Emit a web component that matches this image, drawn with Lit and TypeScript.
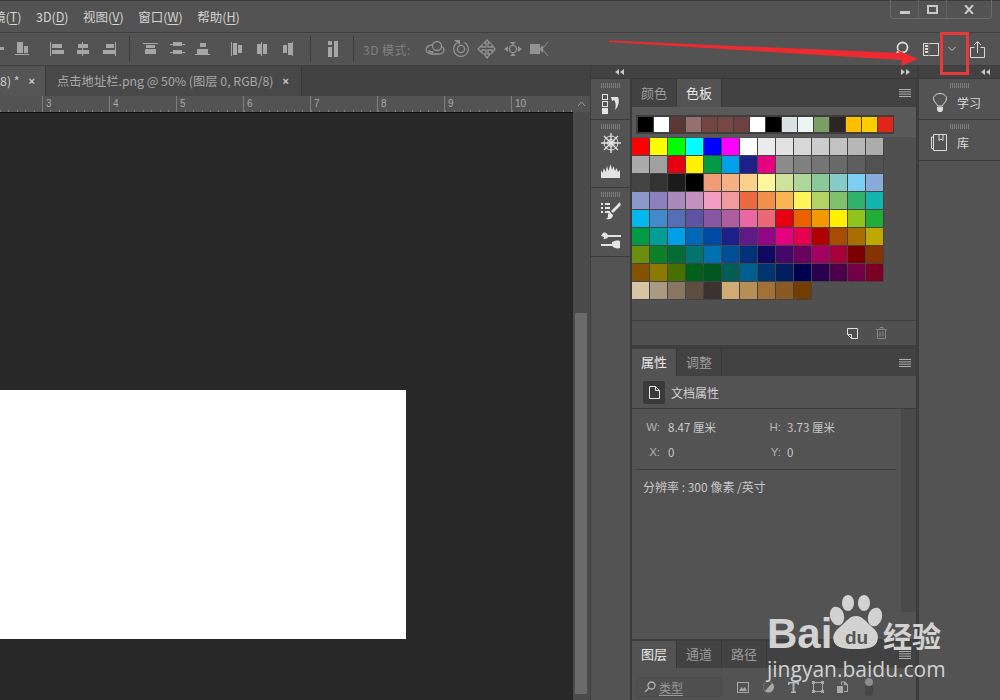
import { LitElement, html, css, svg } from "lit";
import { customElement } from "lit/decorators.js";

const RECENT = ["#000000","#ffffff","#5c3835","#976f6d","#744643","#754845","#6e4241","#ffffff","#000000","#d9e1e2","#ecf5f3","#7b9e64","#2c2523","#ffbf00","#ffcd00","#e1251b"];
const SWATCHES = [
"#ff0000 #ffff00 #00ff00 #00ffff #0000ff #ff00ff #ffffff #ebebeb #e1e1e1 #d7d7d7 #cccccc #c2c2c2 #b7b7b7 #acacac",
"#ababab #a0a0a0 #e60012 #fff200 #009944 #00a0e9 #1d2088 #e4007f #8c8c8c #808080 #757575 #6a6a6a #5e5e5e #525252",
"#444444 #333333 #1c1c1c #000000 #f19a76 #f5b183 #fad08a #fff69a #cee29b #afd69b #89c997 #84ccc9 #7ecef4 #88abda",
"#8c97cb #8c80bd #aa89bd #c490bf #f29ec2 #f29b9f #ec6941 #f19149 #f8b551 #fff45c #b3d465 #80c269 #31b16c #13b5b1",
"#00b7ee #448aca #556fb5 #5f52a0 #8957a1 #ae5da1 #ea68a2 #eb6877 #e60012 #eb6100 #f39800 #fff100 #8fc31f #22ac38",
"#009944 #009e96 #00a0e9 #0068b7 #0049a5 #1d2088 #601986 #920783 #e4007f #e5004f #b10000 #a84d00 #a86e00 #bfa900",
"#6b8e0c #0c7f29 #056c36 #007470 #0071b0 #004f94 #00317a #100964 #44076a #6a005f #a40061 #a5003a #7d0000 #833400",
"#855300 #8a7a00 #477000 #00621a #00561f #005e55 #005e91 #00356f #001f5e #00004e #2b004f #4d004a #730046 #7c0024",
"#d7c4a4 #aa9a84 #887563 #5e4e41 #3c3230 #d0ab73 #b58f55 #a07236 #885a21 #723e00",
].flatMap((r) => r.split(" "));

const ico = (body: unknown, w = 16, h = 16) =>
  html`<svg class="ic" width=${w} height=${h} viewBox="0 0 ${w} ${h}" fill="currentColor">${body}</svg>`;
const r = (x: number, y: number, w: number, h: number) => svg`<rect x=${x} y=${y} width=${w} height=${h}></rect>`;

const ALIGN = [
  [r(0,7,16,1),r(7,0,1,16),r(12,6,4,3)],
  [r(3,1,6,11),r(10,5,4,7),r(1,13,14,1)],
  [r(1,1,1,14),r(3,3,10,4),r(3,9,12,4)],
  [r(7,1,1,14),r(3,3,10,4),r(2,9,12,4)],
  [r(14,1,1,14),r(5,3,8,4),r(2,9,12,4)],
  [r(0,2,15,1),r(3,4,9,3),r(2,8,11,5)],
  [r(1,3,15,1),r(4,1,9,4),r(1,11,15,1),r(4,9,9,4)],
  [r(5,2,6,4),r(0,13,15,1),r(2,8,11,5)],
  [r(2,1,1,14),r(4,2,4,12),r(9,4,4,8)],
  [r(6,1,1,14),r(2,3,4,10),r(8,3,4,10)],
  [r(11,1,1,14),r(2,4,4,8),r(7,2,4,12)],
];

const W3D = [
  svg`<g fill="none" stroke="currentColor" stroke-width="1.3"><circle cx="12" cy="7" r="4.5"></circle><path d="M7 6c-3 0-6 2-6 5 0 2 3 4 6 4h7c3 0 5-2 5-4 0-2-1-3-3-4M4 12l2 3 2-2z"></path></g>`,
  svg`<g fill="none" stroke="currentColor" stroke-width="1.3"><circle cx="10" cy="10" r="7.4" stroke-dasharray="38 8" transform="rotate(-60 10 10)"></circle><circle cx="10" cy="10" r="3.6"></circle></g><path d="M3 1h6v5z"></path>`,
  svg`<g fill="none" stroke="currentColor" stroke-width="1.3"><path d="M10 1l3 3h-2v4h4V6l3 4-3 4v-3h-4v4h2l-3 4-3-4h2v-4H5v3l-4-4 4-4v2h4V4H7z"></path></g>`,
  svg`<circle cx="10" cy="10" r="3.6" fill="none" stroke="currentColor" stroke-width="1.4"></circle><path d="M7 3h6l-3 3zM7 17h6l-3-3zM1 10l4-3v6zM19 10l-4-3v6z"></path>`,
  svg`<path d="M1 5h10v10H1zM11 9l3-3v8l-3-3z"></path><path d="M19 3l-6 7 6 7" fill="none" stroke="currentColor" stroke-width="1"></path>`,
];

const chev = (left: boolean) => html`<svg class="chev" width="9" height="6" viewBox="0 0 9 6" fill="#c8c8c8">
  ${left ? svg`<path d="M4 0v6L0 3zM9 0v6L5 3z"></path>` : svg`<path d="M0 0v6l4-3zM5 0v6l4-3z"></path>`}</svg>`;

const menuIcon = html`<svg class="burger" width="12" height="8" viewBox="0 0 12 8" fill="#b0b0b0">${r(0,0,12,1)}${r(0,2.33,12,1)}${r(0,4.66,12,1)}${r(0,7,12,1)}</svg>`;

@customElement("app-root")
export class AppRoot extends LitElement {
  static styles = css`
    :host { display: block; width: 1000px; height: 700px; position: relative; overflow: hidden; background: #535353;
      font-family: "Noto Sans CJK SC", "Liberation Sans", sans-serif; color: #d6d6d6; font-size: 12px; }
    svg { display: block; flex: none; }
    .menu { height: 31px; border-top: 1px solid #3c3c3c; display: flex; align-items: center; gap: 14.5px; position: relative; font-size: 12.5px; color: #d4d4d4; white-space: nowrap; }
    .menu .first { margin-left: -7px; }
    .menu u { text-underline-offset: 2px; }
    .winbtns { position: absolute; right: 8px; top: -1px; width: 102px; height: 19px; box-sizing: border-box; border: 1px solid #6b6b6b; border-top: none; border-radius: 0 0 4px 4px; display: flex; color: #c8c8c8; }
    .winbtns > div { display: flex; align-items: center; justify-content: center; border-right: 1px solid #626262; }
    .winbtns > div:nth-child(1) { width: 28px; padding-top: 6px; box-sizing: border-box; }
    .winbtns > div:nth-child(2) { width: 27px; }
    .winbtns > div:nth-child(3) { flex: 1; border-right: none; }
    .opts { height: 32px; border-top: 1px solid #3f3f3f; border-bottom: 1px solid #3f3f3f; display: flex; align-items: center; color: #a6a6a6; }
    .grp { display: flex; gap: 10px; align-items: center; }
    .g0 { margin-left: -12px; }
    .g1 { margin-left: 19px; }
    .g2 { margin-left: 13px; }
    .g3 { margin-left: 18px; }
    .g5 { margin-left: 14px; }
    .sep { width: 1px; height: 26px; background: #3c3c3c; }
    .s1 { margin-left: 12px; }
    .s2 { margin-left: 13px; }
    .label3d { margin-left: 9px; width: 53px; color: #808080; font-size: 12px; white-space: nowrap; letter-spacing: .5px; }
    .g3d { margin-left: 9px; gap: 6px; color: #929292; }
    .right { margin-left: auto; margin-right: 15px; display: flex; align-items: center; color: #d8d8d8; }
    .right .m1 { margin-left: 14px; }
    .right .m2 { margin-left: 8px; color: #c4c4c4; }
    .right .m3 { margin-left: 13px; }
    .body { height: 634px; display: flex; }
    .doc { width: 591px; display: flex; flex-direction: column; border-right: 1px solid #3c3c3c; flex: none; box-sizing: border-box; }
    .tabs { height: 30px; background: #424242; display: flex; flex: none; font-size: 12.3px; color: #a8a8a8; white-space: nowrap; }
    .tab { display: flex; align-items: center; border-right: 1px solid #383838; box-sizing: border-box; }
    .t1 { width: 46px; background: #555; color: #cfcfcf; justify-content: flex-end; padding-right: 10px; gap: 9px; }
    .t2 { width: 256px; background: #484848; padding-left: 11px; gap: 9px; }
    .x { font-size: 11px; font-weight: 700; color: #c8c8c8; font-family: "Liberation Sans", sans-serif; }
    .docmain { flex: 1; display: flex; min-height: 0; }
    .viewcol { flex: 1; display: flex; flex-direction: column; min-width: 0; }
    .ruler { height: 16px; flex: none; display: flex; padding-left: 42px; overflow: hidden; color: #a8a8a8; font-size: 10px; background-color: #535353;
      background-image: repeating-linear-gradient(90deg, #7a7a7a 0 1px, transparent 1px 8.4px); background-size: 100% 2px; background-position: 0 100%; background-repeat: no-repeat; }
    .ruler span { width: 67px; flex: none; border-left: 1px solid #7d7d7d; box-sizing: border-box; padding: 2px 0 0 3px; font-family: "Liberation Sans", sans-serif; line-height: 12px; }
    .canvas { flex: 1; background: #282828; border-top: 1px solid #0e0e0e; padding-top: 277px; box-sizing: border-box; }
    .paper { width: 406px; height: 249px; background: #fff; }
    .vscroll { width: 17px; display: flex; flex-direction: column; background: #4b4b4b; flex: none; }
    .vup { height: 16px; background: #535353; display: flex; align-items: center; justify-content: center; }
    .vtrack { height: 201px; }
    .vthumb { width: 12px; height: 381px; margin-left: 2px; background: #6b6b6b; }
    .mid { width: 326px; display: flex; flex-direction: column; flex: none; }
    .strip { height: 13px; flex: none; background: #424242; display: flex; align-items: center; justify-content: space-between; padding: 0 7px 0 24px; border-bottom: 1px solid #3a3a3a; box-sizing: border-box; }
    .midrow { flex: 1; display: flex; min-height: 0; }
    .dock { width: 39px; flex: none; border-right: 2px solid #3c3c3c; }
    .dgroup { border-bottom: 1px solid #3a3a3a; display: flex; flex-direction: column; align-items: center; box-sizing: border-box; color: #e0e0e0; }
    .grip { width: 20px; margin-top: 4px; flex: none; background: repeating-linear-gradient(90deg, #7c7c7c 0 1px, transparent 1px 2px); height: 5px; }
    .d1 { height: 41px; gap: 6px; }
    .d2 { height: 68px; }
    .d3 { height: 69px; }
    .d2 .a { margin-top: 4px; }
    .d2 .b { margin-top: 11px; }
    .d3 .a { margin-top: 5px; }
    .d3 .b { margin-top: 12px; }
    .panels { flex: 1; min-width: 0; display: flex; flex-direction: column; border-right: 1px solid #3c3c3c; }
    .ptabs { height: 28px; flex: none; background: #424242; display: flex; font-size: 13px; color: #9c9c9c; position: relative; align-items: stretch; }
    .ptabs.short { height: 27px; }
    .ptabs > span { width: 45px; display: flex; align-items: center; justify-content: center; border-right: 1px solid #383838; box-sizing: border-box; padding-bottom: 2px; }
    .ptabs > .on { background: #535353; color: #e8e8e8; }
    .ptabs .burger { position: absolute; right: 5px; top: 10px; }
    .swpanel { height: 238px; flex: none; display: flex; flex-direction: column; background: #505050; }
    .recentwrap { height: 30px; flex: none; background: #595959; padding: 8px 0 0 4px; box-sizing: border-box; }
    .recent { display: inline-flex; background: #3e3e3e; padding: 2px 1px 2px 2px; gap: 1px; }
    .recent i { width: 15px; height: 15px; display: block; }
    .grid { height: 184px; flex: none; padding-top: 1px; box-sizing: border-box; display: grid; grid-template-columns: repeat(14, 17px); grid-auto-rows: 17px; gap: 1px; align-content: start; border-bottom: 1px solid #3f3f3f; }
    .grid i { display: block; box-shadow: 1px 1px 0 #434343; }
    .swfoot { flex: 1; display: flex; align-items: center; justify-content: flex-end; gap: 18px; padding: 0 29px 0 0; }
    .divider { height: 4px; flex: none; background: #3e3e3e; }
    .divider.thin { height: 2px; }
    .subhead { height: 33px; flex: none; display: flex; align-items: center; gap: 6px; padding-left: 11px; border-bottom: 1px solid #3c3c3c; box-sizing: border-box; font-size: 12px; color: #d2d2d2; }
    .docbox { width: 22px; height: 23px; background: #3a3a3a; border-radius: 2px; display: flex; align-items: center; justify-content: center; color: #e4e4e4; }
    .props { height: 230px; flex: none; display: flex; }
    .pmain { flex: 1; min-width: 0; }
    .pscroll { width: 15px; height: 203px; background: #4a4a4a; flex: none; }
    .pgrid { display: grid; grid-template-columns: 28px 100px 21px 1fr; grid-auto-rows: 25px; padding-top: 5px; font-size: 11.5px; align-items: center; color: #c8c8c8; height: 51px; box-sizing: content-box; }
    .lb { text-align: right; color: #b4b4b4; font-family: "Liberation Sans", sans-serif; }
    .v1 { padding-left: 8px; white-space: nowrap; }
    .v2 { padding-left: 6px; white-space: nowrap; }
    .hr { height: 1px; background: #3e3e3e; margin: 4px 5px 0 4px; }
    .res { padding: 8px 0 0 11px; font-size: 12px; color: #c8c8c8; white-space: nowrap; }
    .filter { flex: 1; display: flex; align-items: center; padding: 6px 0 0 4px; color: #a8a8a8; }
    .finput { width: 86px; height: 20px; box-sizing: border-box; border: 1px solid #4c4c4c; border-radius: 3px; display: flex; align-items: center; gap: 3px; padding-left: 7px; color: #9a9a9a; font-size: 12px; background: #505050; }
    .finput u { text-underline-offset: 2px; }
    .ficons { display: flex; align-items: center; gap: 13px; margin-left: 15px; }
    .toggle { width: 8px; height: 18px; margin-left: 4px; border-radius: 4px; background: #474747; }
    .toggle::before { content: ""; display: block; width: 8px; height: 8px; border-radius: 50%; background: #8e8e8e; }
    .rdock { flex: 1; display: flex; flex-direction: column; min-width: 0; border-left: 2px solid #3c3c3c; }
    .rdock .strip { padding: 0 10px 0 0; justify-content: flex-end; }
    .ritem { height: 41px; border-bottom: 1px solid #3a3a3a; box-sizing: border-box; display: flex; flex-direction: column; }
    .ritem .grip { align-self: center; }
    .ritem .row { display: flex; align-items: center; gap: 10px; padding: 5px 0 0 14px; color: #dcdcdc; font-size: 12px; }
    .ritem .row.lib { padding-left: 12px; gap: 10px; }
    .overlay { position: absolute; left: 0; top: 0; pointer-events: none; }
    .redbox { position: absolute; left: 940px; top: 32px; width: 29px; height: 43px; box-sizing: border-box; border: 3px solid #e8393b; }
    .wm { position: absolute; left: 767px; top: 595px; width: 190px; color: #d2d2d2; }
    .wmtop { display: flex; align-items: flex-end; height: 60px; position: relative; }
    .bai { font: 700 42px/42px "Liberation Sans", sans-serif; width: 67px; }
    .paw { position: absolute; left: 57px; top: 0; }
    .du { position: absolute; left: 78px; top: 33px; font: 700 19px/20px "Liberation Sans", sans-serif; color: #555; }
    .jy { position: absolute; left: 116px; top: 24px; font: 700 29px/32px "Noto Sans CJK SC", sans-serif; white-space: nowrap; }
    .url { font: 400 21px/24px "Open Sans", "Liberation Sans", sans-serif; white-space: nowrap; margin-top: 2px; }
  `;

  render() {
    const icons = (from: number, to: number) => ALIGN.slice(from, to).map((b) => ico(b));
    return html`
      <div class="menu">
        <span class="first">镜(<u>T</u>)</span>
        <span>3D(<u>D</u>)</span>
        <span>视图(<u>V</u>)</span>
        <span>窗口(<u>W</u>)</span>
        <span>帮助(<u>H</u>)</span>
        <div class="winbtns">
          <div><svg width="10" height="3" fill="currentColor">${r(0,0,10,3)}</svg></div>
          <div><svg width="11" height="9" viewBox="0 0 11 9" fill="none" stroke="currentColor" stroke-width="2"><rect x="1" y="1" width="9" height="7"></rect></svg></div>
          <div><svg width="10" height="9" viewBox="0 0 10 9" fill="none" stroke="currentColor" stroke-width="2"><path d="M1 0l8 9M9 0L1 9"></path></svg></div>
        </div>
      </div>
      <div class="opts">
        <div class="grp g0">${icons(0, 2)}</div>
        <div class="grp g1">${icons(2, 5)}</div>
        <div class="sep s1"></div>
        <div class="grp g2">${icons(5, 8)}</div>
        <div class="grp g3">${icons(8, 11)}</div>
        <div class="sep s2"></div>
        <div class="grp g5">${ico([r(3,6,4,10),r(3,0,4,4),r(9,0,4,16)])}</div>
        <div class="sep s1"></div>
        <span class="label3d">3D 模式:</span>
        <div class="grp g3d">${W3D.map((b) => ico(b, 20, 20))}</div>
        <div class="right">
          <svg width="16" height="16" viewBox="0 0 16 16" fill="none" stroke="currentColor" stroke-width="1.8"><circle cx="9.500" cy="6.500" r="5"></circle><path d="M6 10l-5 5"></path></svg>
          <svg class="m1" width="16" height="13" viewBox="0 0 16 13" fill="none" stroke="currentColor"><rect x=".5" y=".5" width="15" height="12"></rect><path d="M2 3h3M2 6h3M2 9h3" stroke-width="2"></path><path d="M6 0v13" stroke="#777"></path></svg>
          <svg class="m2" width="10" height="6" viewBox="0 0 10 6" fill="none" stroke="currentColor"><path d="M1.500 1l3.500 3.500L8.500 1"></path></svg>
          <svg class="m3" width="15" height="17" viewBox="0 0 15 17" fill="none" stroke="currentColor"><path d="M4.500 6.500H.5v10h14v-10h-4M7.500 12V1M4 4l3.500-3.500L11 4"></path></svg>
        </div>
      </div>
      <div class="body">
        <div class="doc">
          <div class="tabs">
            <div class="tab t1"><span>8) *</span><span class="x">×</span></div>
            <div class="tab t2"><span>点击地址栏.png @ 50% (图层 0, RGB/8)</span><span class="x">×</span></div>
          </div>
          <div class="docmain">
            <div class="viewcol">
              <div class="ruler">${[3,4,5,6,7,8,9,10].map((n) => html`<span>${n}</span>`)}</div>
              <div class="canvas"><div class="paper"></div></div>
            </div>
            <div class="vscroll">
              <div class="vup"><svg width="9" height="6" viewBox="0 0 9 6" fill="none" stroke="#9a9a9a"><path d="M1 5l3.500-4L8 5"></path></svg></div>
              <div class="vtrack"></div>
              <div class="vthumb"></div>
            </div>
          </div>
        </div>
        <div class="mid">
          <div class="strip">${chev(true)}${chev(false)}</div>
          <div class="midrow">
            <div class="dock">
              <div class="dgroup d1"><div class="grip"></div>
                <svg width="18" height="20" viewBox="0 0 18 20" fill="none" stroke="#e4e4e4"><rect x=".5" y=".5" width="5" height="5"></rect><rect x=".5" y="7.500" width="5" height="5"></rect><rect x=".5" y="14.500" width="5" height="5" fill="#e4e4e4"></rect><path d="M9 3h7c2 5 0 10-3 13 1-4 1-8-1-10l-2 1z" fill="#e4e4e4" stroke="none"></path></svg>
              </div>
              <div class="dgroup d2"><div class="grip"></div>
                <svg class="a" width="20" height="20" viewBox="0 0 20 20" fill="none" stroke="#e4e4e4"><path d="M10 0v20M0 10h20M3 3l14 14M17 3L3 17" stroke-width="1.300"></path><circle cx="10" cy="10" r="3.500"></circle><circle cx="10" cy="10" r="7"></circle></svg>
                <svg class="b" width="19" height="14" viewBox="0 0 19 14" fill="#e4e4e4"><path d="M0 14V6l1.500 3L3 4l1.500 4L6 2l1.500 5L9.500 0 11 6l1.500-4L14 7l1.500-3L17 8l2-2v8z"></path></svg>
              </div>
              <div class="dgroup d3"><div class="grip"></div>
                <svg class="a" width="20" height="18" viewBox="0 0 20 18" fill="#e4e4e4"><path d="M0 1h2v2H0zM4 1h5v2H4zM0 5h2v2H0zM4 5h5v2H4zM0 9h2v2H0zM4 9h5v2H4zM19 1c1 1 1 2 0 3l-7 7-2-2 7-7c1-1 1-2 2-1zM9 10l3 3c0 3-3 5-7 4 2-1 2-2 2-4 0-1 1-3 2-3z"></path></svg>
                <svg class="b" width="20" height="17" viewBox="0 0 20 17" fill="#e4e4e4"><path d="M2 1c2-1 4 0 5 2h13v2H7c-1 2-3 2-5 2 1-1 1-1 1-2L0 4zM0 12h11v-2c2-1 6-2 8-1v7c-3 1-6 0-8-2H0z"></path></svg>
              </div>
            </div>
            <div class="panels">
              <div class="ptabs"><span>颜色</span><span class="on">色板</span>${menuIcon}</div>
              <div class="swpanel">
                <div class="recentwrap"><div class="recent">${RECENT.map((c) => html`<i style="background:${c}"></i>`)}</div></div>
                <div class="grid">${SWATCHES.map((c) => html`<i style="background:${c}"></i>`)}</div>
                <div class="swfoot">
                  <svg width="11" height="11" viewBox="0 0 11 11" fill="none" stroke="#e0e0e0"><path d="M.5.500h10v10h-6l-4-4zM.5 6.500h4v4"></path></svg>
                  <svg width="11" height="12" viewBox="0 0 11 12" fill="none" stroke="#858585"><path d="M0 2.500h11M4 2V.500h3V2M1.500 3v8.500h8V3M4 4.500v5M7 4.500v5"></path></svg>
                </div>
              </div>
              <div class="divider"></div>
              <div class="ptabs short"><span class="on">属性</span><span>调整</span>${menuIcon}</div>
              <div class="subhead">
                <div class="docbox"><svg width="11" height="13" viewBox="0 0 11 13" fill="none" stroke="currentColor"><path d="M.5.500h6l4 4v8H.5zM6.500.500v4h4"></path></svg></div>
                <span>文档属性</span>
              </div>
              <div class="props">
                <div class="pmain">
                  <div class="pgrid">
                    <span class="lb">W:</span><span class="v1">8.47 厘米</span><span class="lb">H:</span><span class="v2">3.73 厘米</span>
                    <span class="lb">X:</span><span class="v1">0</span><span class="lb">Y:</span><span class="v2">0</span>
                  </div>
                  <div class="hr"></div>
                  <div class="res">分辨率 : 300 像素 /英寸</div>
                </div>
                <div class="pscroll"></div>
              </div>
              <div class="divider thin"></div>
              <div class="ptabs short"><span class="on">图层</span><span>通道</span><span>路径</span>${menuIcon}</div>
              <div class="filter">
                <div class="finput">
                  <svg width="12" height="12" viewBox="0 0 12 12" fill="none" stroke="#b4b4b4" stroke-width="1.300"><circle cx="7.500" cy="4.500" r="3.500"></circle><path d="M5 7l-4 4"></path></svg>
                  <u>类型</u>
                </div>
                <div class="ficons">
                  <svg width="12" height="11" viewBox="0 0 12 11" fill="#a8a8a8"><path d="M0 0h12v11H0zM1 1v9h10V1z" fill-rule="evenodd"></path><path d="M2 9l2.500-4L6 7l2-2 2 4z"></path></svg>
                  <svg width="13" height="12" viewBox="0 0 13 12"><circle cx="6.500" cy="6" r="5.500" fill="#a8a8a8"></circle><path d="M3 10L10 2A5 5 0 0 0 3 10z" fill="#555"></path></svg>
                  <svg width="11" height="11" viewBox="0 0 11 11" fill="#b4b4b4"><path d="M0 0h11v3h-1L9 1.500H6.500V9.500H8V11H3V9.500h1.500v-8H2L1 3H0z"></path></svg>
                  <svg width="12" height="12" viewBox="0 0 12 12" fill="none" stroke="#a8a8a8"><rect x="1.500" y="1.500" width="9" height="9"></rect><path d="M0 0h3v3H0zM9 0h3v3H9zM0 9h3v3H0zM9 9h3v3H9z" fill="#a8a8a8" stroke="none"></path></svg>
                  <svg width="11" height="12" viewBox="0 0 11 12" fill="#a8a8a8"><path d="M4 .500h4l3 3V11H7V10h3V4H7V1.500H5V4H4zM0 5h6v7H0z"></path></svg>
                  <div class="toggle"></div>
                </div>
              </div>
            </div>
          </div>
        </div>
        <div class="rdock">
          <div class="strip">${chev(true)}</div>
          <div class="ritem"><div class="grip"></div>
            <div class="row">
              <svg width="14" height="19" viewBox="0 0 14 19" fill="none" stroke="#dcdcdc"><path d="M4.500 13c0-2-4-4-4-7.500C.5 2.500 3.500.5 7 .5s6.500 2 6.500 5c0 3.500-4 5.500-4 7.500z"></path><path d="M4 14h6v3l-1.500 2h-3L4 17z" fill="#dcdcdc" stroke="none"></path></svg>
              <span>学习</span>
            </div>
          </div>
          <div class="ritem"><div class="grip"></div>
            <div class="row lib">
              <svg width="16" height="17" viewBox="0 0 16 17" fill="none" stroke="#dcdcdc"><path d="M2.500 14.500H.5V3h2M2.500.5h13v16h-13zM8 .5v6l2-1.500 2 1.500v-6"></path></svg>
              <span>库</span>
            </div>
          </div>
        </div>
      </div>
      <svg class="overlay" width="1000" height="100" viewBox="0 0 1000 100"><polygon fill="#ee2a30" points="609,40.500 900,53 897,50 918,59 901,66 902,60 609,42"></polygon></svg>
      <div class="redbox"></div>
      <div class="wm">
        <div class="wmtop">
          <span class="bai">Bai</span>
          <svg class="paw" width="66" height="60" viewBox="0 0 66 60" fill="#d2d2d2">
            <ellipse cx="13" cy="21" rx="7" ry="9.500" transform="rotate(-15 13 21)"></ellipse>
            <ellipse cx="24" cy="8" rx="6" ry="8"></ellipse>
            <ellipse cx="40" cy="8" rx="6" ry="8"></ellipse>
            <ellipse cx="51" cy="22" rx="7" ry="9.500" transform="rotate(15 51 22)"></ellipse>
            <path d="M32 21c7 0 10 6 16 11 6 5 7 9 5 15-3 6-9 7-21 7s-19-1-22-7c-2-6 0-10 6-15 6-5 9-11 16-11z"></path>
          </svg>
          <span class="du">du</span>
          <span class="jy">经验</span>
        </div>
        <div class="url">jingyan.baidu.com</div>
      </div>
    `;
  }
}
